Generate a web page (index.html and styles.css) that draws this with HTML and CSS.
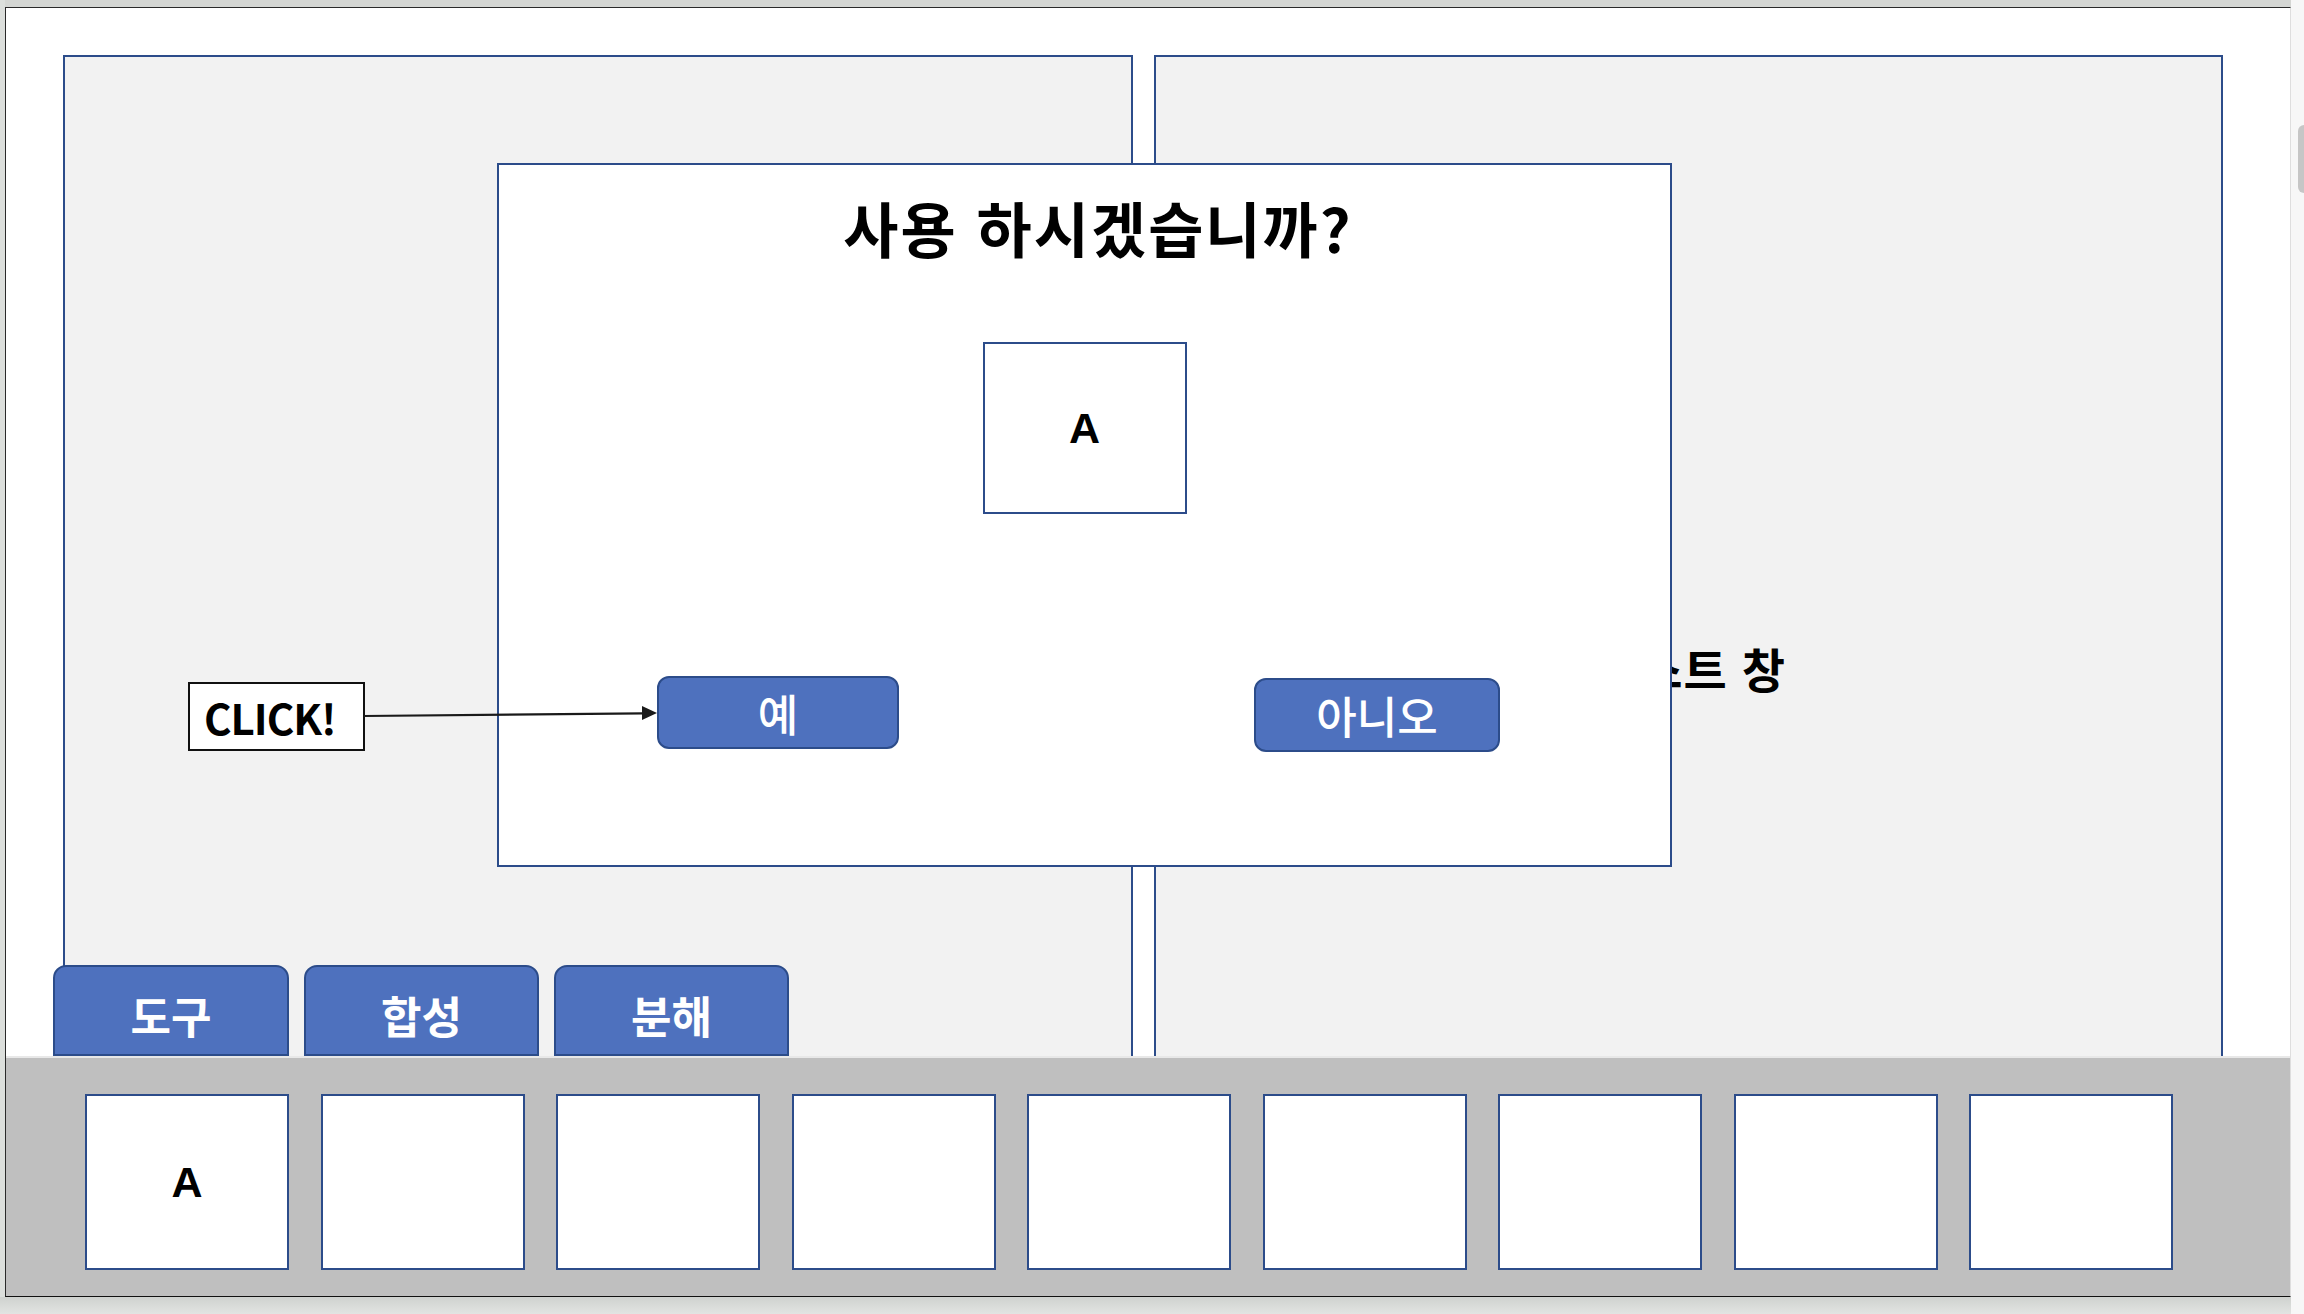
FILE: index.html
```html
<!DOCTYPE html>
<html lang="ko">
<head>
<meta charset="utf-8">
<title>사용 하시겠습니까?</title>
<link rel="stylesheet" href="styles.css">
</head>
<body>
<div class="screen">
  <div class="main">
    <div class="topbar"></div>
    <div class="frame">
      <div class="stage">
        <div class="panel panel-left"></div>
        <div class="panel panel-right"><span class="panel-label">퀘스트 창</span></div>
      </div>

      <div class="toolbar">
        <div class="tabs">
          <div class="tab">도구</div>
          <div class="tab">합성</div>
          <div class="tab">분해</div>
        </div>
        <div class="inventory">
          <div class="slot">A</div>
          <div class="slot"></div>
          <div class="slot"></div>
          <div class="slot"></div>
          <div class="slot"></div>
          <div class="slot"></div>
          <div class="slot"></div>
          <div class="slot"></div>
          <div class="slot"></div>
        </div>
      </div>

      <div class="dialog">
        <div class="dialog-title">사용 하시겠습니까?</div>
        <div class="dialog-item">A</div>
        <div class="dialog-buttons">
          <div class="btn btn-yes">예</div>
          <div class="btn btn-no">아니오</div>
        </div>
      </div>

      <div class="click-note">CLICK!</div>
      <svg class="click-arrow" width="300" height="30" viewBox="0 0 300 30">
        <line x1="0" y1="24" x2="279" y2="21.3" stroke="#1a1a1a" stroke-width="2.2"/>
        <polygon points="278,14 293,21 278,28" fill="#1a1a1a"/>
      </svg>
    </div>
    <div class="bottom-shade"></div>
  </div>
  <div class="scrollstrip"><div class="thumb"></div></div>
</div>
</body>
</html>
```

FILE: styles.css
```css
* { box-sizing: border-box; }

html, body {
  margin: 0;
  padding: 0;
  width: 2304px;
  height: 1314px;
  overflow: hidden;
  background: #dcdfdc;
  font-family: "Noto Sans CJK KR", "Noto Sans", sans-serif;
}

.screen {
  display: flex;
  width: 2304px;
  height: 1314px;
}

.main {
  width: 2291px;
  display: flex;
  flex-direction: column;
}

.topbar {
  height: 7px;
  background: #d4d6d3;
  margin-left: 5px;
}

.frame {
  position: relative;
  margin-left: 5px;
  width: 2286px;
  height: 1290px;
  background: #ffffff;
  border-top: 1px solid #2a2a2a;
  border-left: 1px solid #2a2a2a;
  border-bottom: 1px solid #111111;
  border-right: 1px solid #dedede;
  overflow: hidden;
}

.bottom-shade {
  flex: 1;
  background: linear-gradient(#cfd2cf, #e2e4e2);
}

.scrollstrip {
  position: relative;
  width: 13px;
  height: 1314px;
  background: #f7f7f7;
}

.thumb {
  position: absolute;
  top: 125px;
  right: 0;
  width: 6px;
  height: 68px;
  background: #c6c6c6;
  border-radius: 6px 0 0 6px;
}

/* panels */
.stage {
  display: flex;
  gap: 21px;
  padding: 47px 0 0 57px;
}

.panel {
  height: 1224px;
  background: #f2f2f2;
  border: 2px solid #2c4c8a;
}

.panel-left { width: 1070px; }

.panel-right {
  width: 1069px;
  display: flex;
  align-items: center;
  justify-content: center;
}

.panel-label {
  font-size: 47px;
  font-weight: 700;
  line-height: 1;
  color: #000;
  letter-spacing: 1px;
  margin-left: 4px;
}

/* bottom toolbar */
.toolbar {
  position: absolute;
  left: 0;
  right: 0;
  bottom: 0;
}

.tabs {
  display: flex;
  gap: 15px;
  padding-left: 47px;
  height: 91px;
}

.tab {
  width: 236px;
  height: 91px;
  background: #4e71be;
  border: 2px solid #2c4c8a;
  border-radius: 13px 13px 0 0;
  color: #ffffff;
  font-size: 44px;
  font-weight: 700;
  line-height: 1;
  display: flex;
  align-items: center;
  justify-content: center;
  padding-top: 8px;
}

.tab + .tab { width: 235px; }

.inventory {
  height: 240px;
  background: #bfbfbf;
  border-top: 2px solid #e8e8e8;
  display: flex;
  gap: 31.5px;
  padding: 36px 0 0 79px;
}

.slot {
  width: 204px;
  height: 176px;
  background: #ffffff;
  border: 2px solid #2c4c8a;
  display: flex;
  align-items: center;
  justify-content: center;
  font-family: "Liberation Sans", Arial, sans-serif;
  font-weight: 700;
  font-size: 43px;
  color: #000;
}

/* dialog */
.dialog {
  position: absolute;
  left: 491px;
  top: 155px;
  width: 1175px;
  height: 704px;
  background: #ffffff;
  border: 2px solid #2c4c8a;
  display: flex;
  flex-direction: column;
  align-items: center;
  padding-top: 32px;
}

.dialog-title {
  font-size: 60px;
  font-weight: 700;
  line-height: 1;
  color: #000;
  letter-spacing: 2px;
  margin-left: 27px;
}

.dialog-item {
  margin-top: 85px;
  width: 204px;
  height: 172px;
  border: 2px solid #2c4c8a;
  display: flex;
  align-items: center;
  justify-content: center;
  font-family: "Liberation Sans", Arial, sans-serif;
  font-weight: 700;
  font-size: 43px;
  color: #000;
}

.dialog-buttons {
  align-self: stretch;
  display: flex;
  justify-content: space-between;
  align-items: flex-start;
  margin-top: 162px;
  padding: 0 170px 0 158px;
}

.btn {
  background: #4e71be;
  border: 2px solid #2c4c8a;
  border-radius: 12px;
  color: #ffffff;
  font-size: 44px;
  font-weight: 500;
  line-height: 1;
  display: flex;
  align-items: center;
  justify-content: center;
}

.btn-yes {
  width: 242px;
  height: 73px;
}

.btn-no {
  width: 246px;
  height: 74px;
  margin-top: 2px;
}

/* annotation */
.click-note {
  position: absolute;
  left: 182px;
  top: 674px;
  width: 177px;
  height: 69px;
  background: #ffffff;
  border: 2px solid #111111;
  display: flex;
  align-items: center;
  justify-content: flex-start;
  padding-left: 14px;
  font-size: 42px;
  font-weight: 700;
  line-height: 1;
  color: #000;
  letter-spacing: -1px;
}

.click-arrow {
  position: absolute;
  left: 358px;
  top: 684px;
}
```
